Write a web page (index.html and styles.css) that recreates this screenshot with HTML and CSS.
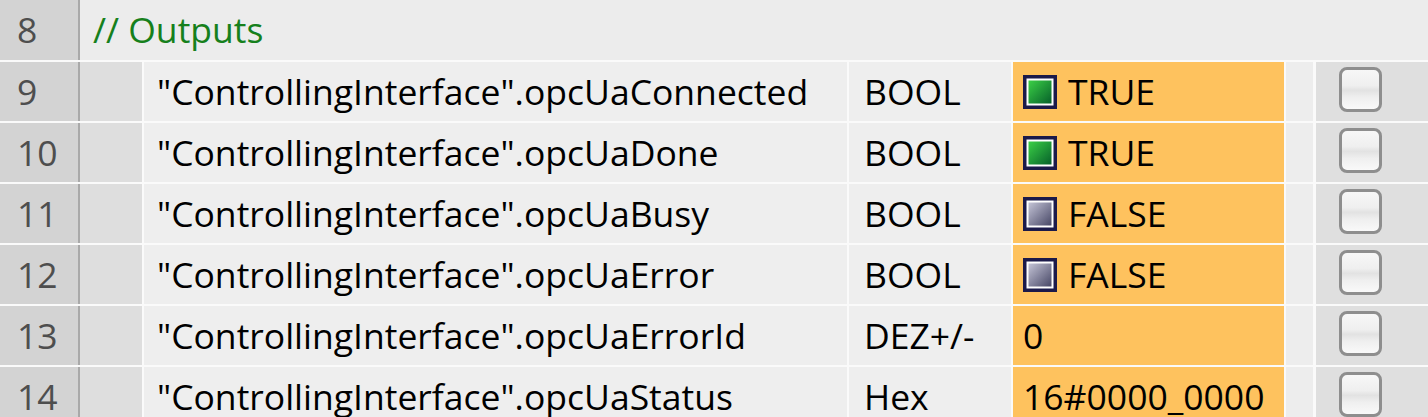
FILE: index.html
```html
<!DOCTYPE html>
<html>
<head>
<meta charset="utf-8">
<link rel="stylesheet" href="styles.css">
</head>
<body>
<svg class="defs" width="0" height="0" aria-hidden="true">
  <defs>
    <linearGradient id="gTrue" x1="0" y1="0" x2="1" y2="1">
      <stop offset="0" stop-color="#3bd046"/>
      <stop offset="1" stop-color="#06602a"/>
    </linearGradient>
    <linearGradient id="gFalse" x1="0" y1="0" x2="1" y2="1">
      <stop offset="0" stop-color="#c4c4d6"/>
      <stop offset="1" stop-color="#474766"/>
    </linearGradient>
  </defs>
</svg>
<div class="table">
  <div class="row comment-row">
    <div class="cell num">8</div>
    <div class="cell comment">// Outputs</div>
  </div>

  <div class="row">
    <div class="cell num">9</div>
    <div class="cell indent"></div>
    <div class="cell name">"ControllingInterface".opcUaConnected</div>
    <div class="cell type">BOOL</div>
    <div class="cell value"><svg class="bool" width="34" height="34" viewBox="0 0 34 34"><rect x="1.75" y="1.75" width="30.5" height="30.5" fill="#fff" stroke="#1b1a4a" stroke-width="3.5"/><rect x="5.5" y="5.5" width="23" height="23" fill="url(#gTrue)"/></svg>TRUE</div>
    <div class="cell spacer"></div>
    <div class="cell check"><span class="checkbox"></span></div>
  </div>

  <div class="row">
    <div class="cell num">10</div>
    <div class="cell indent"></div>
    <div class="cell name">"ControllingInterface".opcUaDone</div>
    <div class="cell type">BOOL</div>
    <div class="cell value"><svg class="bool" width="34" height="34" viewBox="0 0 34 34"><rect x="1.75" y="1.75" width="30.5" height="30.5" fill="#fff" stroke="#1b1a4a" stroke-width="3.5"/><rect x="5.5" y="5.5" width="23" height="23" fill="url(#gTrue)"/></svg>TRUE</div>
    <div class="cell spacer"></div>
    <div class="cell check"><span class="checkbox"></span></div>
  </div>

  <div class="row">
    <div class="cell num">11</div>
    <div class="cell indent"></div>
    <div class="cell name">"ControllingInterface".opcUaBusy</div>
    <div class="cell type">BOOL</div>
    <div class="cell value"><svg class="bool" width="34" height="34" viewBox="0 0 34 34"><rect x="1.75" y="1.75" width="30.5" height="30.5" fill="#fff" stroke="#1b1a4a" stroke-width="3.5"/><rect x="5.5" y="5.5" width="23" height="23" fill="url(#gFalse)"/></svg>FALSE</div>
    <div class="cell spacer"></div>
    <div class="cell check"><span class="checkbox"></span></div>
  </div>

  <div class="row">
    <div class="cell num">12</div>
    <div class="cell indent"></div>
    <div class="cell name">"ControllingInterface".opcUaError</div>
    <div class="cell type">BOOL</div>
    <div class="cell value"><svg class="bool" width="34" height="34" viewBox="0 0 34 34"><rect x="1.75" y="1.75" width="30.5" height="30.5" fill="#fff" stroke="#1b1a4a" stroke-width="3.5"/><rect x="5.5" y="5.5" width="23" height="23" fill="url(#gFalse)"/></svg>FALSE</div>
    <div class="cell spacer"></div>
    <div class="cell check"><span class="checkbox"></span></div>
  </div>

  <div class="row">
    <div class="cell num">13</div>
    <div class="cell indent"></div>
    <div class="cell name">"ControllingInterface".opcUaErrorId</div>
    <div class="cell type">DEZ+/-</div>
    <div class="cell value">0</div>
    <div class="cell spacer"></div>
    <div class="cell check"><span class="checkbox"></span></div>
  </div>

  <div class="row">
    <div class="cell num">14</div>
    <div class="cell indent"></div>
    <div class="cell name">"ControllingInterface".opcUaStatus</div>
    <div class="cell type">Hex</div>
    <div class="cell value">16#0000_0000</div>
    <div class="cell spacer"></div>
    <div class="cell check"><span class="checkbox"></span></div>
  </div>
</div>
</body>
</html>
```

FILE: styles.css
```css
html, body {
  margin: 0;
  padding: 0;
  background: #fafafa;
  overflow: hidden;
}

.defs {
  position: absolute;
  width: 0;
  height: 0;
}

.table {
  display: grid;
  row-gap: 2px;
  background: #fafafa;
  font-family: "Open Sans", "Noto Sans", sans-serif;
  font-size: 35.5px;
  line-height: 1;
  color: #000;
}

.row {
  display: grid;
  grid-template-columns: 80px 64px 705px 164px 273px 30px 1fr;
  height: 59px;
}

.comment-row {
  grid-template-columns: 80px 1fr;
  height: 60px;
}

.cell {
  display: flex;
  align-items: center;
  box-sizing: border-box;
  border-right: 2px solid #fafafa;
  white-space: nowrap;
  overflow: hidden;
}

.num {
  background: #d3d3d3;
  border-right: 2px solid #a9a9a9;
  color: #4e4e4e;
  padding-left: 17px;
}

.comment {
  background: #ececec;
  color: #16801c;
  padding-left: 13px;
  border-right: 0;
}

.indent {
  background: #dedede;
}

.name {
  background: #eeeeee;
  padding-left: 13px;
}

.type {
  background: #eeeeee;
  padding-left: 15px;
}

.value {
  background: #fec25e;
  padding-left: 10px;
}

.bool {
  flex: none;
  margin-right: 11px;
}

.spacer {
  background: #ededed;
  border-right-width: 3px;
}

.check {
  background: #dfdfdf;
  border-right: 0;
  padding-left: 23px;
}

.checkbox {
  display: block;
  width: 43px;
  height: 45px;
  box-sizing: border-box;
  border: 3px solid #8e8e8e;
  border-radius: 8px;
  background: linear-gradient(#f7f7f7 0%, #efefef 40%, #e2e2e2 52%, #efefef 70%, #f9f9f9 100%);
  margin-top: -4px;
}
```
